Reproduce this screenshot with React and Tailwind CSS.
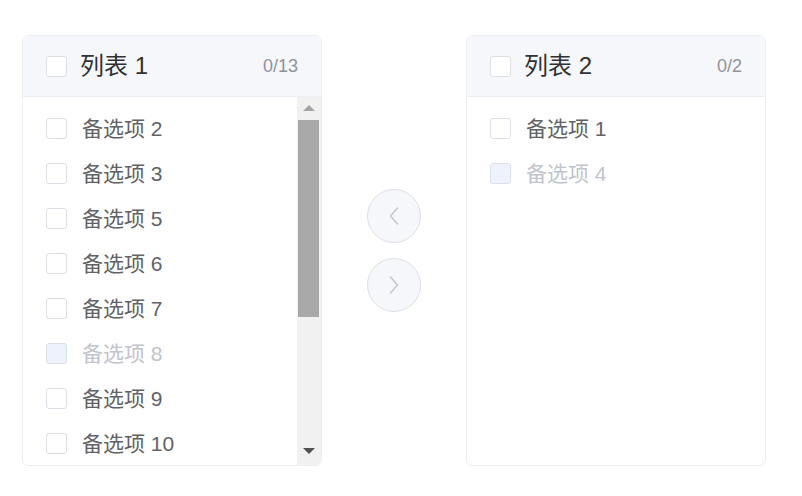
import React from "react";

const font = { fontFamily: '"Liberation Sans", "Noto Sans CJK SC", Arial, sans-serif' };

function Box({ disabled }) {
  return (
    <span
      className={
        "block w-[21px] h-[21px] shrink-0 rounded-[3px] border border-[#dcdfe6] " +
        (disabled ? "bg-[#edf2fc]" : "bg-white")
      }
    />
  );
}

function Item({ label, disabled }) {
  return (
    <div className="h-[45px] flex items-center pl-[23px]">
      <Box disabled={disabled} />
      <span
        className={
          "pl-[15px] text-[21px] leading-none " +
          (disabled ? "text-[#c0c4cc]" : "text-[#606266]")
        }
      >
        {label}
      </span>
    </div>
  );
}

function Scrollbar() {
  return (
    <div className="w-[24px] bg-[#f1f1f1] flex flex-col">
      <div className="h-[23px] flex items-center justify-center">
        <svg width="12" height="7" viewBox="0 0 12 7">
          <polygon points="6,0 12,6 0,6" fill="#a3a3a3" />
        </svg>
      </div>
      <div className="h-[197px] ml-[1px] w-[21px] bg-[#a8a8a8]" />
      <div className="flex-1" />
      <div className="h-[27px] flex items-center justify-center">
        <svg width="12" height="7" viewBox="0 0 12 7">
          <polygon points="0,0 12,0 6,6" fill="#505050" />
        </svg>
      </div>
    </div>
  );
}

function Panel({ title, count, items, scroll }) {
  return (
    <div className="w-[300px] h-[431px] border border-[#ebeef5] rounded-[6px] overflow-hidden flex flex-col bg-white">
      <div className="h-[61px] shrink-0 bg-[#f5f7fa] border-b border-[#ebeef5] flex items-center pl-[23px] pr-[23px]">
        <Box />
        <span className="pl-[13px] text-[24px] leading-none text-[#303133]">{title}</span>
        <span className="ml-auto text-[18px] leading-none text-[#909399]">{count}</span>
      </div>
      <div className="flex-1 flex min-h-0">
        <div className="flex-1 pt-[9px] overflow-hidden">
          {items.map((it) => (
            <Item key={it.label} label={it.label} disabled={it.disabled} />
          ))}
        </div>
        {scroll && <Scrollbar />}
      </div>
    </div>
  );
}

function Chevron({ dir }) {
  return (
    <svg width="10" height="20" viewBox="0 0 10 20" fill="none">
      <polyline
        points={dir === "left" ? "8.5,2 1.5,10 8.5,18" : "1.5,2 8.5,10 1.5,18"}
        stroke="#c0c4cc"
        strokeWidth="1.4"
        strokeLinecap="round"
        strokeLinejoin="round"
      />
    </svg>
  );
}

export default function App() {
  const left = [
    { label: "备选项 2" },
    { label: "备选项 3" },
    { label: "备选项 5" },
    { label: "备选项 6" },
    { label: "备选项 7" },
    { label: "备选项 8", disabled: true },
    { label: "备选项 9" },
    { label: "备选项 10" },
  ];
  const right = [{ label: "备选项 1" }, { label: "备选项 4", disabled: true }];
  return (
    <div className="w-[802px] h-[496px] bg-white pt-[35px] pl-[22px] flex items-start" style={font}>
      <Panel title="列表 1" count="0/13" items={left} scroll />
      <div className="mx-[45px] w-[54px] h-[431px] flex flex-col items-center justify-center gap-[15px]">
        <div className="w-[54px] h-[54px] rounded-full border border-[#dcdfe6] bg-[#f5f7fa] flex items-center justify-center">
          <Chevron dir="left" />
        </div>
        <div className="w-[54px] h-[54px] rounded-full border border-[#dcdfe6] bg-[#f5f7fa] flex items-center justify-center">
          <Chevron dir="right" />
        </div>
      </div>
      <Panel title="列表 2" count="0/2" items={right} />
    </div>
  );
}
